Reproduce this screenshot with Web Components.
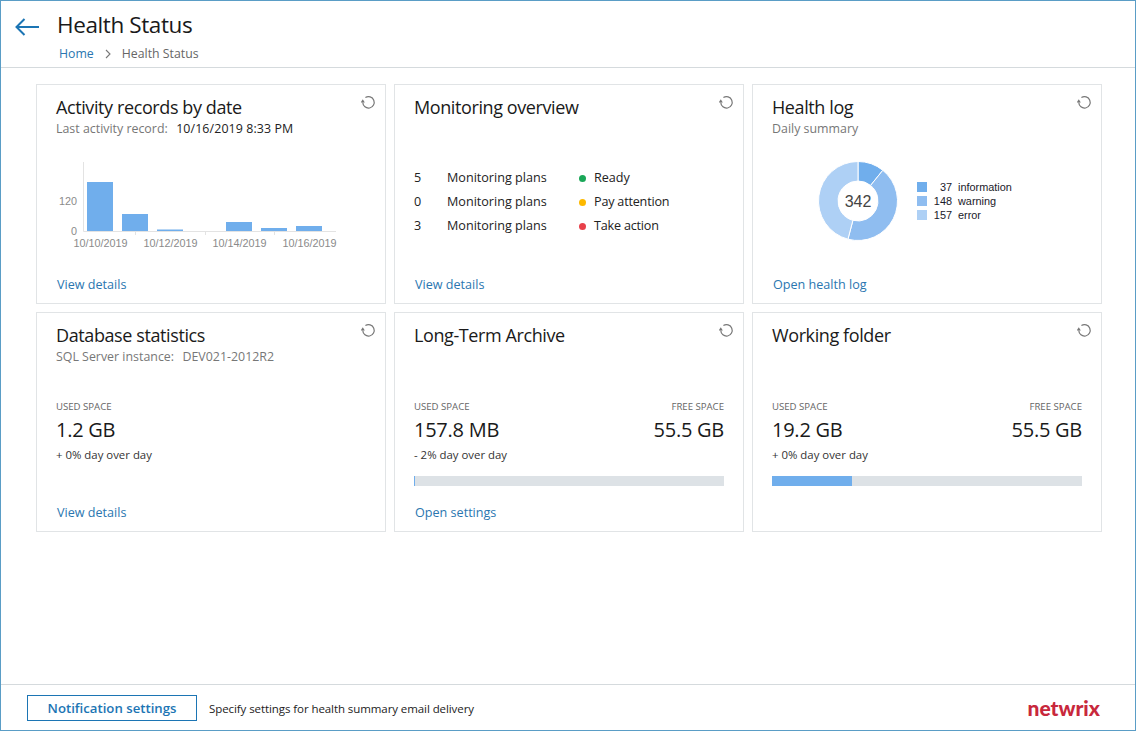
<!DOCTYPE html>
<html><head><meta charset="utf-8">
<style>
html,body{margin:0;padding:0;height:100%;background:#fff}
body{font-family:"Open Sans","Noto Sans",sans-serif;color:#1a1a1a}
hs-card b{font-weight:400;color:#222;margin-left:2px;letter-spacing:.1px}
hs-card em{font-style:normal;margin-left:2px}
</style></head><body>
<hs-app>
  <hs-header slot="header" title="Health Status"></hs-header>
  <hs-card heading="Activity records by date">
    <span slot="sub">Last activity record:&nbsp; <b>10/16/2019 8:33 PM</b></span>
    <hs-bars></hs-bars>
    <a slot="link">View details</a>
  </hs-card>
  <hs-card heading="Monitoring overview">
    <hs-monitor></hs-monitor>
    <a slot="link">View details</a>
  </hs-card>
  <hs-card heading="Health log">
    <span slot="sub">Daily summary</span>
    <hs-donut></hs-donut>
    <a slot="link">Open health log</a>
  </hs-card>
  <hs-card heading="Database statistics">
    <span slot="sub">SQL Server instance:&nbsp; <em>DEV021-2012R2</em></span>
    <hs-storage used="1.2 GB" delta="+ 0% day over day"></hs-storage>
    <a slot="link">View details</a>
  </hs-card>
  <hs-card heading="Long-Term Archive">
    <hs-storage used="157.8 MB" free="55.5 GB" delta="- 2% day over day" fill="1"></hs-storage>
    <a slot="link">Open settings</a>
  </hs-card>
  <hs-card heading="Working folder">
    <hs-storage used="19.2 GB" free="55.5 GB" delta="+ 0% day over day" fill="80"></hs-storage>
  </hs-card>
  <hs-footer slot="footer"></hs-footer>
</hs-app>
<script>
const def=(name,html)=>{customElements.define(name,class extends HTMLElement{
  constructor(){super();this.attachShadow({mode:'open'})}
  connectedCallback(){this.shadowRoot.innerHTML=typeof html==='function'?html(this):html}
})};
const FONT='"Open Sans","Noto Sans",sans-serif';
def('hs-app',`<style>
:host{display:flex;flex-direction:column;box-sizing:border-box;width:1136px;height:731px;border:1px solid #5a9dc6;background:#fff}
main{flex:1;display:grid;grid-template-columns:repeat(3,350px);grid-template-rows:220px 220px;gap:8px;padding:16px 0 0 35px;align-content:start}
</style><slot name="header"></slot><main><slot></slot></main><slot name="footer"></slot>`);
def('hs-header',h=>`<style>
:host{display:flex;box-sizing:border-box;height:67px;border-bottom:1px solid #d5dadd}
svg{margin:16px 0 0 14px;flex:none}
.t{margin-left:18px}
h1{margin:7px 0 0;font:400 22.5px/34px ${FONT};letter-spacing:-.4px;color:#1a1a1a}
nav{display:flex;align-items:center;margin:3px 0 0 2px;font:400 12.3px/18px ${FONT};color:#666}
a{color:#2a76b0}
nav svg{margin:0 11px 0 11px}
</style>
<svg width="24" height="20" viewBox="0 0 24 20" fill="none" stroke="#1c75b4" stroke-width="2"><path d="M24 10H1.5M9.5 2 1.5 10l8 8"/></svg>
<div class="t"><h1>${h.getAttribute('title')}</h1><nav><a>Home</a><svg width="6" height="10" viewBox="0 0 6 10" fill="none" stroke="#777" stroke-width="1.1"><path d="M1 1l4 4-4 4"/></svg><span>Health Status</span></nav></div>`);
def('hs-card',h=>`<style>
:host{display:flex;flex-direction:column;position:relative;box-sizing:border-box;border:1px solid #e1e4e6;background:#fff;padding:9px 19px;min-height:0}
h2{margin:0;font:400 18px/27px ${FONT};letter-spacing:-.4px;color:#1a1a1a}
.sub{font:400 12.4px/15px ${FONT};color:#777;min-height:15px}
.body{flex:1;min-height:0}
.link{font:400 12.6px/18px ${FONT};color:#2a76b0;padding-left:1px;min-height:18px}
svg{position:absolute;top:10px;right:9px}
</style>
<svg width="15" height="15" viewBox="0 0 15 15" fill="none" stroke="#777" stroke-width="1.2"><path d="M4.4 2.6A5.7 5.7 0 1 1 1.8 7.5"/><path d="M1.8 4.2 3.8 7.4H-.2z" fill="#777" stroke="none"/></svg>
<h2>${h.getAttribute('heading')}</h2><div class="sub"><slot name="sub"></slot></div>
<div class="body"><slot></slot></div><div class="link"><slot name="link"></slot></div>`);
def('hs-bars',()=>{
 const bars=[[87,182],[122,214],[157,229.5],[226,222],[261,228],[296,226]];
 const ox=56,oy=152;
 return `<style>:host{display:block;padding-top:16px}svg{display:block;overflow:visible}
 text{font:10.8px "Liberation Sans",sans-serif;fill:#8a8a8a}</style>
 <svg width="310" height="92" viewBox="${ox} ${oy} 310 92">
 <path d="M83.5 162V231.5H336M135.5 232v3M205.5 232v3M274.5 232v3" fill="none" stroke="#e3e3e3"/>
 ${bars.map(b=>`<rect x="${b[0]}" y="${b[1]}" width="26" height="${231-b[1]}" fill="#70aeec"/>`).join('')}
 <text x="77" y="205" text-anchor="end">120</text><text x="77" y="235" text-anchor="end">0</text>
 ${[[100.5,'10/10/2019'],[170.5,'10/12/2019'],[239.5,'10/14/2019'],[309.5,'10/16/2019']].map(l=>`<text x="${l[0]}" y="247" text-anchor="middle">${l[1]}</text>`).join('')}
 </svg>`});
def('hs-monitor',()=>`<style>
:host{display:grid;grid-template-columns:33px 128px 19px auto;grid-auto-rows:24px;align-items:center;padding-top:30px;font:400 12.6px/24px ${FONT};color:#222}
i{width:7px;height:7px;border-radius:50%;display:block;margin-left:4px}
.s{letter-spacing:-.2px}
</style>
<span>5</span><span>Monitoring plans</span><i style="background:#1aa758"></i><span>Ready</span>
<span>0</span><span>Monitoring plans</span><i style="background:#fdb900"></i><span class="s">Pay attention</span>
<span>3</span><span>Monitoring plans</span><i style="background:#e8404a"></i><span class="s">Take action</span>`);
def('hs-donut',()=>{
 const vals=[[37,'#70aeec','information'],[148,'#8fbdf0','warning'],[157,'#aed0f5','error']];
 const R=39.5,r=20;let a=0,p='';
 const pt=(rad,t)=>[(40+rad*Math.sin(t)).toFixed(2),(40-rad*Math.cos(t)).toFixed(2)];
 for(const v of vals){const s=a;a+=v[0]/342*2*Math.PI;const l=a-s>Math.PI?1:0;
  const [x1,y1]=pt(R,s),[x2,y2]=pt(R,a),[x3,y3]=pt(r,a),[x4,y4]=pt(r,s);
  p+=`<path d="M${x1} ${y1}A${R} ${R} 0 ${l} 1 ${x2} ${y2}L${x3} ${y3}A${r} ${r} 0 ${l} 0 ${x4} ${y4}Z" fill="${v[1]}" stroke="#fff" stroke-width="1"/>`}
 return `<style>
 :host{display:flex;align-items:center;padding:25px 0 0 46px;font:400 10.9px/14px "Liberation Sans",sans-serif;color:#1a1a2a}
 .d{position:relative;width:80px;height:80px;flex:none}
 .n{position:absolute;inset:2px 0 0;display:flex;align-items:center;justify-content:center;font-size:16px;color:#444}
 .l{display:grid;grid-template-columns:10px 25px auto;column-gap:0;margin-left:19px;align-items:center}
 .l i{width:10px;height:10px;display:block}.l span{text-align:right}.l em{font-style:normal;margin-left:6px}
 svg{display:block}
 </style>
 <div class="d"><svg width="80" height="80" viewBox="0 0 80 80">${p}</svg><div class="n">342</div></div>
 <div class="l">${vals.map(v=>`<i style="background:${v[1]}"></i><span>${v[0]}</span><em>${v[2]}</em>`).join('')}</div>`});
def('hs-storage',h=>{
 const free=h.getAttribute('free'),fill=h.getAttribute('fill');
 return `<style>
 :host{display:block;padding-top:36px}
 .r{display:flex;justify-content:space-between}
 .c{display:flex;flex-direction:column}.e{align-items:flex-end}
 small{font:400 9.6px/14px ${FONT};color:#666}
 strong{font:400 20px/32px ${FONT};letter-spacing:-.25px;color:#1a1a1a}
 p{margin:1px 0 0;font:400 11.4px/16px ${FONT};color:#333}
 .b{height:10px;background:#dde2e6;margin-top:13px;display:flex}
 .b div{background:#70aeec}
 </style>
 <div class="r"><div class="c"><small>USED SPACE</small><strong>${h.getAttribute('used')}</strong></div>
 ${free?`<div class="c e"><small>FREE SPACE</small><strong>${free}</strong></div>`:''}</div>
 <p>${h.getAttribute('delta')}</p>
 ${fill?`<div class="b"><div style="width:${fill}px"></div></div>`:''}`});
def('hs-footer',()=>`<style>
:host{display:flex;align-items:center;box-sizing:border-box;height:46px;border-top:1px solid #d5dadd;padding:0 35px 0 26px}
button{box-sizing:border-box;width:170px;height:26px;border:1px solid #1c75b4;background:#fff;color:#1c75b4;font:600 13.2px/22px ${FONT};padding:0;margin-top:1px}
span{margin-left:12px;font:400 11.5px/16px ${FONT};letter-spacing:-.08px;color:#222;flex:1;margin-top:3px}
b{font:900 21px/22px Lato,sans-serif;color:#c8283c;margin-top:1px}
</style><button>Notification settings</button><span>Specify settings for health summary email delivery</span><b>netwrix</b>`);
</script>
</body></html>
